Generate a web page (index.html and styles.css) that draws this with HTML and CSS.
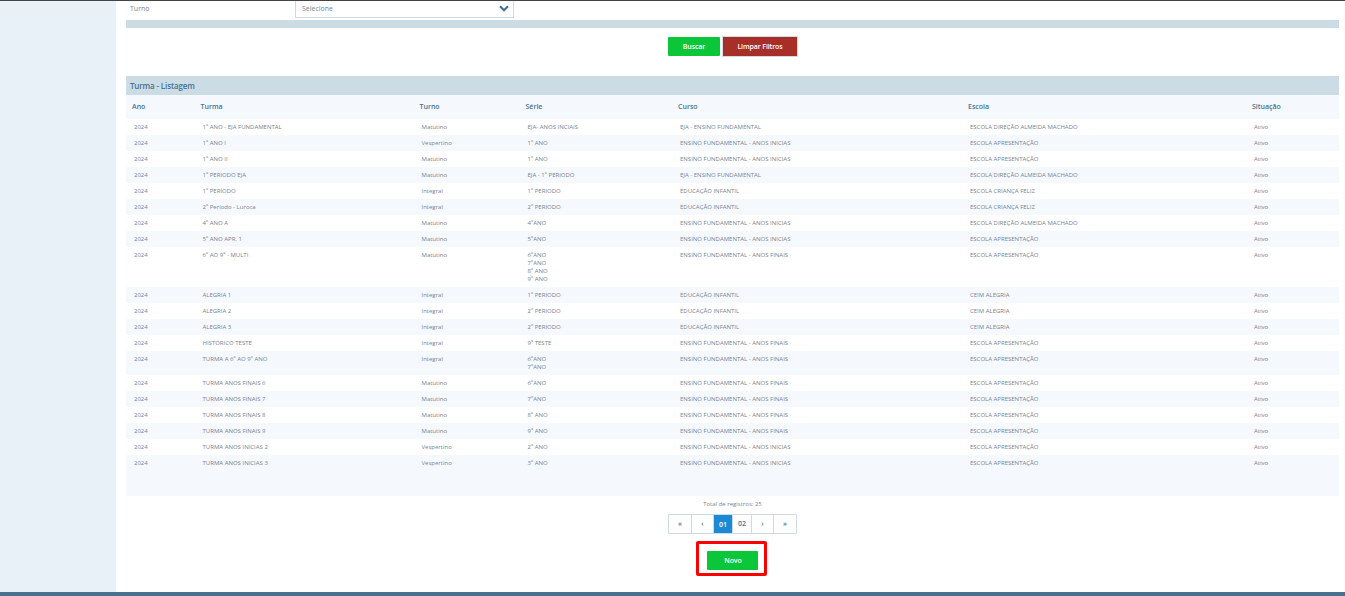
FILE: index.html
```
<!DOCTYPE html>
<html lang="pt-BR">
<head>
<meta charset="utf-8">
<title>Turma - Listagem</title>
<link rel="stylesheet" href="styles.css">
</head>
<body>
<div class="page">
<div class="body">
<aside class="sidebar"></aside>
<main class="content">
<div class="filter">
<label class="filter-label">Turno</label>
<div class="select"><span>Selecione</span><svg class="chevron" width="10" height="7" viewBox="0 0 10 7"><path d="M1 1.3 5 5.2 9 1.3" fill="none" stroke="#47728f" stroke-width="2.3"/></svg></div>
</div>
<div class="bar"></div>
<div class="actions"><button class="btn green">Buscar</button><button class="btn red">Limpar Filtros</button></div>
<h2 class="title">Turma - Listagem</h2>
<table class="list">
<colgroup><col class="c1"><col class="c2"><col class="c3"><col class="c4"><col class="c5"><col class="c6"><col class="c7"></colgroup>
<thead><tr><th>Ano</th><th>Turma</th><th>Turno</th><th>Série</th><th>Curso</th><th>Escola</th><th>Situação</th></tr></thead>
<tbody>
<tr><td>2024</td><td>1º ANO - EJA FUNDAMENTAL</td><td>Matutino</td><td>EJA- ANOS INCIAIS</td><td>EJA - ENSINO FUNDAMENTAL</td><td>ESCOLA DIREÇÃO ALMEIDA MACHADO</td><td>Ativo</td></tr>
<tr><td>2024</td><td>1º ANO I</td><td>Vespertino</td><td>1º ANO</td><td>ENSINO FUNDAMENTAL - ANOS INICIAS</td><td>ESCOLA APRESENTAÇÃO</td><td>Ativo</td></tr>
<tr><td>2024</td><td>1º ANO II</td><td>Matutino</td><td>1º ANO</td><td>ENSINO FUNDAMENTAL - ANOS INICIAS</td><td>ESCOLA APRESENTAÇÃO</td><td>Ativo</td></tr>
<tr><td>2024</td><td>1º PERIODO EJA</td><td>Matutino</td><td>EJA - 1º PERIODO</td><td>EJA - ENSINO FUNDAMENTAL</td><td>ESCOLA DIREÇÃO ALMEIDA MACHADO</td><td>Ativo</td></tr>
<tr><td>2024</td><td>1º PERÍODO</td><td>Integral</td><td>1º PERIODO</td><td>EDUCAÇÃO INFANTIL</td><td>ESCOLA CRIANÇA FELIZ</td><td>Ativo</td></tr>
<tr><td>2024</td><td>2º Período - Luroca</td><td>Integral</td><td>2º PERIODO</td><td>EDUCAÇÃO INFANTIL</td><td>ESCOLA CRIANÇA FELIZ</td><td>Ativo</td></tr>
<tr><td>2024</td><td>4º ANO A</td><td>Matutino</td><td>4ºANO</td><td>ENSINO FUNDAMENTAL - ANOS INICIAS</td><td>ESCOLA DIREÇÃO ALMEIDA MACHADO</td><td>Ativo</td></tr>
<tr><td>2024</td><td>5º ANO APR. 1</td><td>Matutino</td><td>5ºANO</td><td>ENSINO FUNDAMENTAL - ANOS INICIAS</td><td>ESCOLA APRESENTAÇÃO</td><td>Ativo</td></tr>
<tr><td>2024</td><td>6º AO 9º - MULTI</td><td>Matutino</td><td>6ºANO<br>7ºANO<br>8º ANO<br>9º ANO</td><td>ENSINO FUNDAMENTAL - ANOS FINAIS</td><td>ESCOLA APRESENTAÇÃO</td><td>Ativo</td></tr>
<tr><td>2024</td><td>ALEGRIA 1</td><td>Integral</td><td>1º PERIODO</td><td>EDUCAÇÃO INFANTIL</td><td>CEIM ALEGRIA</td><td>Ativo</td></tr>
<tr><td>2024</td><td>ALEGRIA 2</td><td>Integral</td><td>2º PERIODO</td><td>EDUCAÇÃO INFANTIL</td><td>CEIM ALEGRIA</td><td>Ativo</td></tr>
<tr><td>2024</td><td>ALEGRIA 3</td><td>Integral</td><td>2º PERIODO</td><td>EDUCAÇÃO INFANTIL</td><td>CEIM ALEGRIA</td><td>Ativo</td></tr>
<tr><td>2024</td><td>HISTÓRICO TESTE</td><td>Integral</td><td>9º TESTE</td><td>ENSINO FUNDAMENTAL - ANOS FINAIS</td><td>ESCOLA APRESENTAÇÃO</td><td>Ativo</td></tr>
<tr><td>2024</td><td>TURMA A 6º AO 9º ANO</td><td>Integral</td><td>6ºANO<br>7ºANO</td><td>ENSINO FUNDAMENTAL - ANOS FINAIS</td><td>ESCOLA APRESENTAÇÃO</td><td>Ativo</td></tr>
<tr><td>2024</td><td>TURMA ANOS FINAIS 6</td><td>Matutino</td><td>6ºANO</td><td>ENSINO FUNDAMENTAL - ANOS FINAIS</td><td>ESCOLA APRESENTAÇÃO</td><td>Ativo</td></tr>
<tr><td>2024</td><td>TURMA ANOS FINAIS 7</td><td>Matutino</td><td>7ºANO</td><td>ENSINO FUNDAMENTAL - ANOS FINAIS</td><td>ESCOLA APRESENTAÇÃO</td><td>Ativo</td></tr>
<tr><td>2024</td><td>TURMA ANOS FINAIS 8</td><td>Matutino</td><td>8º ANO</td><td>ENSINO FUNDAMENTAL - ANOS FINAIS</td><td>ESCOLA APRESENTAÇÃO</td><td>Ativo</td></tr>
<tr><td>2024</td><td>TURMA ANOS FINAIS 9</td><td>Matutino</td><td>9º ANO</td><td>ENSINO FUNDAMENTAL - ANOS FINAIS</td><td>ESCOLA APRESENTAÇÃO</td><td>Ativo</td></tr>
<tr><td>2024</td><td>TURMA ANOS INICIAS 2</td><td>Vespertino</td><td>2º ANO</td><td>ENSINO FUNDAMENTAL - ANOS INICIAS</td><td>ESCOLA APRESENTAÇÃO</td><td>Ativo</td></tr>
<tr class="last"><td>2024</td><td>TURMA ANOS INICIAS 3</td><td>Vespertino</td><td>3º ANO</td><td>ENSINO FUNDAMENTAL - ANOS INICIAS</td><td>ESCOLA APRESENTAÇÃO</td><td>Ativo</td></tr>
</tbody>
</table>
<p class="total">Total de registros: 25</p>
<nav class="pages"><a class="edge">«</a><a class="step">‹</a><a class="num active">01</a><a class="num">02</a><a class="step">›</a><a class="edge">»</a></nav>
<div class="new"><button class="btn green">Novo</button></div>
</main>
</div>
<footer class="footer"></footer>
</div>
</body>
</html>
```
FILE: styles.css
```
* { box-sizing: border-box; }
body { margin: 0; font-family: "Open Sans", sans-serif; color: #77828f; background: #fff; }
.page { height: 596px; display: flex; flex-direction: column; border-top: 1px solid #444; overflow: hidden; }
.body { flex: 1; min-height: 0; display: flex; }
.sidebar { width: 116px; background: #e8f0f8; }
.content { flex: 1; padding: 0 6px 0 10px; display: flex; flex-direction: column; }
.filter { height: 17px; display: flex; align-items: flex-start; font-size: 7px; line-height: 10px; color: #7d868f; }
.filter-label { width: 169px; padding: 3px 0 0 4px; }
.select { width: 219px; height: 17px; padding: 3px 4px 0 6px; border: 1px solid #ccdce6; border-top: 0; display: flex; justify-content: space-between; }
.chevron { margin-top: 1px; }
.bar { height: 8px; margin-top: 2px; background: #ccdce5; }
.actions { height: 21px; margin-top: 8px; display: flex; justify-content: center; align-items: center; gap: 2px; }
.btn { height: 19px; padding: 0 0 0 1px; border: 0; border-radius: 1px; color: #fff; font: 600 7px/19px "Open Sans", sans-serif; letter-spacing: -0.12px; }
.green { width: 52px; background: #0cc63a; }
.red { width: 76px; height: 21px; background: #a82e28; border: 1px solid #ccdce6; }
.title { height: 19px; margin: 19px 0 0; padding-left: 4px; background: #ccdce5; color: #47728f; font-size: 8px; line-height: 20px; font-weight: 600; letter-spacing: -0.15px; }
.list { width: 1213px; table-layout: fixed; border-collapse: collapse; font-size: 6px; line-height: 8px; }
.c1 { width: 68.5px; }
.c2 { width: 219px; }
.c3 { width: 106px; }
.c4 { width: 152.5px; }
.c5 { width: 290px; }
.c6 { width: 284px; }
.c7 { width: 93px; }
th { height: 24px; padding: 0 0 1px 6px; background: #f5f9fe; color: #47728f; font-size: 7px; font-weight: 600; text-align: left; }
td { height: 16px; padding: 4px 0 4px 8px; vertical-align: top; }
tbody tr:nth-child(even) { background: #f5f9fe; }
.last td { height: 41px; }
.total { margin: 4px 0 0; font-size: 6px; line-height: 8px; text-align: center; color: #7d868f; }
.pages { height: 20px; width: 129px; margin: 6px auto 0; display: flex; border: 1px solid #ccdce6; font-size: 7px; line-height: 18px; font-weight: 600; color: #47728f; text-align: center; }
.pages a { border-left: 1px solid #ccdce6; }
.pages a:first-child { border-left: 0; }
.edge { flex: 1; }
.step { width: 22px; }
.num { width: 19px; }
.pages .active { background: #1b89d3; color: #fff; line-height: 20px; }
.new { width: 71px; height: 35px; margin: 7px 0 0 570px; padding: 7px 0 0 8px; border: 3px solid #f00; border-radius: 2px; }
.new .btn { display: block; width: 51px; }
.footer { height: 4px; background: #47728f; }
```
